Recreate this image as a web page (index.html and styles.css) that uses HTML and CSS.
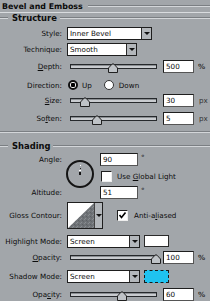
FILE: index.html
```html
<!DOCTYPE html>
<html lang="en">
<head>
<meta charset="UTF-8">
<title>Bevel and Emboss</title>
<link rel="stylesheet" href="styles.css">
</head>
<body>

<div class="panel">

    <div class="title-row">
        <span class="title">Bevel and Emboss</span>
        <span class="rule"></span>
    </div>

    <!-- STRUCTURE -->
    <div class="group-head">
        <span class="rule lead"></span>
        <span class="head">Structure</span>
        <span class="rule"></span>
    </div>

    <div class="row r-style">
        <span class="lbl">Style:</span>
        <div class="select w-style"><span>Inner Bevel</span><i class="btn"></i></div>
    </div>

    <div class="row r-tech">
        <span class="lbl">Technique:</span>
        <div class="select w-tech"><span>Smooth</span><i class="btn"></i></div>
    </div>

    <div class="row r-depth">
        <span class="lbl"><u>D</u>epth:</span>
        <div class="slider"><i class="thumb" style="left: 49%"></i></div>
        <div class="field">500</div>
        <span class="unit">%</span>
    </div>

    <div class="row r-dir">
        <span class="lbl">Direction:</span>
        <span class="radio on"></span><span class="opt">Up</span>
        <span class="radio down"></span><span class="opt">Down</span>
    </div>

    <div class="row r-size">
        <span class="lbl"><u>S</u>ize:</span>
        <div class="slider"><i class="thumb" style="left: 16%"></i></div>
        <div class="field">30</div>
        <span class="unit px">px</span>
    </div>

    <div class="row r-soften">
        <span class="lbl">So<u>f</u>ten:</span>
        <div class="slider"><i class="thumb" style="left: 31%"></i></div>
        <div class="field">5</div>
        <span class="unit px">px</span>
    </div>

    <div class="sep"></div>

    <!-- SHADING -->
    <div class="group-head g-shading">
        <span class="rule lead"></span>
        <span class="head">Shading</span>
        <span class="rule"></span>
    </div>

    <div class="angle-block">
        <div class="angle-labels">
            <span class="lbl">Angle:</span>
            <span class="lbl">Altitude:</span>
        </div>
        <svg class="dial" width="30" height="30" viewBox="0 0 30 30">
            <circle cx="15" cy="15" r="13" fill="none" stroke="#141414" stroke-width="2"/>
            <rect x="15" y="6" width="1" height="1" fill="#fff"/>
            <rect x="15" y="9" width="1" height="1" fill="#222"/>
            <rect x="14" y="11" width="2" height="1" fill="#fff"/>
            <rect x="14" y="13" width="2" height="3" fill="#141414"/>
        </svg>
        <div class="angle-fields">
            <div class="row">
                <div class="field f-angle">90</div><span class="deg">°</span>
            </div>
            <div class="row r-global">
                <span class="check"></span><span class="opt">Use <u>G</u>lobal Light</span>
            </div>
            <div class="row r-alt">
                <div class="field f-angle">51</div><span class="deg">°</span>
            </div>
        </div>
    </div>

    <div class="row r-gloss">
        <span class="lbl">Gloss Contour:</span>
        <div class="contour">
            <svg width="26" height="25" viewBox="0 0 26 25">
                <defs>
                    <pattern id="grain" width="4" height="4" patternUnits="userSpaceOnUse">
                        <rect width="4" height="4" fill="#6f7377"/>
                        <rect x="0" y="0" width="1" height="1" fill="#878b8f"/>
                        <rect x="2" y="1" width="1" height="1" fill="#5c6064"/>
                        <rect x="1" y="3" width="1" height="1" fill="#8a8e92"/>
                        <rect x="3" y="2" width="1" height="1" fill="#63676b"/>
                    </pattern>
                </defs>
                <rect width="26" height="25" fill="#fff"/>
                <polygon points="0,25 26,0 26,25" fill="url(#grain)"/>
            </svg>
            <i class="btn"></i>
        </div>
        <span class="check checked"></span><span class="opt">Anti-a<u>l</u>iased</span>
    </div>

    <div class="row r-hmode">
        <span class="lbl">Highlight Mode:</span>
        <div class="select w-mode"><span>Screen</span><i class="btn"></i></div>
        <span class="swatch"></span>
    </div>

    <div class="row r-hop">
        <span class="lbl"><u>O</u>pacity:</span>
        <div class="slider"><i class="thumb" style="left: 100%"></i></div>
        <div class="field">100</div>
        <span class="unit">%</span>
    </div>

    <div class="row r-smode">
        <span class="lbl">Shadow Mode:</span>
        <div class="select w-mode"><span>Screen</span><i class="btn"></i></div>
        <span class="swatch cyan"></span>
    </div>

    <div class="row r-sop">
        <span class="lbl">Opa<u>c</u>ity:</span>
        <div class="slider"><i class="thumb" style="left: 60%"></i></div>
        <div class="field">60</div>
        <span class="unit">%</span>
    </div>

</div>

</body>
</html>
```

FILE: styles.css
```css
body {
    margin: 0;
    background: #a2a6aa;
    font-family: "DejaVu Sans", Verdana, sans-serif;
    font-size: 7.2px;
    color: #0c0c0c;
}

u { text-decoration: underline; text-underline-offset: 1px; }

.panel {
    width: 210px;
    height: 301px;
    overflow: hidden;
}

/* HEADERS */
.title-row {
    display: flex;
    align-items: center;
    height: 12px;
    border-bottom: 1px solid #d9dcdf;
}

.title {
    font-weight: bold;
    font-size: 7.9px;
    padding-left: 2px;
    margin-right: 5px;
}

.rule {
    flex: 1;
    height: 0;
    border-top: 1px solid #7b7f83;
    border-bottom: 1px solid #d3d6d9;
}

.rule.lead { flex: none; width: 8px; }

.group-head {
    display: flex;
    align-items: center;
    height: 10px;
}

.head {
    font-weight: bold;
    font-size: 8.4px;
    padding: 0 3px 0 4px;
}

.g-shading { margin-top: 8px; }

.sep {
    margin-top: 6px;
    border-top: 1px solid #7b7f83;
    border-bottom: 1px solid #d3d6d9;
}

/* ROWS */
.row {
    display: flex;
    align-items: center;
    height: 14px;
}

.lbl {
    flex: none;
    width: 62px;
    margin-right: 5px;
    text-align: right;
    white-space: nowrap;
}

.r-style  { margin-top: 3px; }
.r-tech   { margin-top: 2px; }
.r-depth  { margin-top: 3px; }
.r-dir    { margin-top: 5px; }
.r-size   { margin-top: 1px; }
.r-soften { margin-top: 4px; }
.r-gloss  { margin-top: 2px; height: 28px; }
.r-hmode  { margin-top: 5px; }
.r-hop    { margin-top: 2px; }
.r-smode  { margin-top: 5px; }
.r-sop    { margin-top: 4px; }

/* CONTROLS */
.select {
    display: flex;
    align-items: center;
    height: 13px;
    box-sizing: border-box;
    background: #fff;
    border: 1px solid #1e1e1e;
    padding-left: 2px;
}

.select span { flex: 1; white-space: nowrap; overflow: hidden; }

.w-style { width: 85px; }
.w-tech  { width: 70px; }
.w-mode  { width: 73px; }

.btn {
    flex: none;
    width: 10px;
    height: 11px;
    box-sizing: border-box;
    background: #b3b7bb;
    border-left: 1px solid #2a2a2a;
    display: flex;
    align-items: center;
    justify-content: center;
}

.btn::after {
    content: "";
    border-left: 3px solid transparent;
    border-right: 3px solid transparent;
    border-top: 3px solid #111;
}

.slider {
    position: relative;
    flex: none;
    width: 87px;
    height: 5px;
    box-sizing: border-box;
    margin-left: 3px;
    border: 1px solid #26292c;
    background: #c9ccd0;
    box-shadow: inset 0 1px 0 #8a8e92;
}

.thumb {
    position: absolute;
    top: -2px;
    width: 10px;
    height: 10px;
    margin-left: -5px;
    background: url("data:image/svg+xml;utf8,<svg xmlns='http://www.w3.org/2000/svg' width='10' height='10'><path d='M0.5 9.5 V5 L4 1.2 Q5 0.4 6 1.2 L9.5 5 V9.5 Z' fill='%23bfc3c7' stroke='%23202020'/></svg>");
}

.field {
    flex: none;
    width: 31px;
    height: 13px;
    box-sizing: border-box;
    margin-left: 6px;
    padding: 1px 0 0 2px;
    background: #fff;
    border: 1px solid #1e1e1e;
    border-right-color: #555;
    border-bottom-color: #555;
    line-height: 10px;
}

.unit { margin-left: 4px; font-weight: bold; color: #333; }
.unit.px { font-weight: normal; margin-left: 5px; }

.radio {
    flex: none;
    width: 10px;
    height: 10px;
    box-sizing: border-box;
    border-radius: 50%;
    background: #fff;
    border: 1px solid #333;
    margin-left: 1px;
}

.radio.on {
    background: radial-gradient(circle, #000 0 2px, #fff 2.5px);
    border: 2px solid #111;
}

.radio.down { margin-left: 12px; }

.opt { margin-left: 4px; white-space: nowrap; }
.radio.down + .opt { margin-left: 5px; }

.check {
    flex: none;
    width: 11px;
    height: 11px;
    box-sizing: border-box;
    background: #fff;
    border: 1px solid #1e1e1e;
    border-right-color: #eee;
    border-bottom-color: #eee;
}

.check.checked {
    margin-left: 14px;
    background: #fff url("data:image/svg+xml;utf8,<svg xmlns='http://www.w3.org/2000/svg' width='9' height='9'><path d='M1.5 4 L3.5 6.5 L7.5 1.5' fill='none' stroke='%23000' stroke-width='1.6'/></svg>") center no-repeat;
}

.check.checked + .opt { margin-left: 6px; }

.swatch {
    flex: none;
    width: 25px;
    height: 12px;
    box-sizing: border-box;
    margin-left: 4px;
    background: #fff;
    border: 1px solid #2a2a2a;
}

.swatch.cyan {
    height: 13px;
    background: #1fc3f0;
    border: 1px dashed #1a1a1a;
}

/* ANGLE */
.angle-block {
    display: flex;
    margin-top: 1px;
    height: 47px;
}

.angle-labels {
    display: flex;
    flex-direction: column;
    justify-content: space-between;
    padding: 3px 0 2px;
}

.dial {
    flex: none;
    margin: 7px 0 0 -2px;
}

.angle-fields {
    margin-left: 5px;
}

.f-angle { width: 38px; margin-left: 0; }

.deg { margin-left: 3px; align-self: flex-start; margin-top: 1px; }

.r-global { margin-top: 3px; }
.r-global .check { margin-left: 1px; }
.r-global .opt { margin-left: 5px; }
.r-alt { margin-top: 2px; }

/* GLOSS CONTOUR */
.contour {
    flex: none;
    display: flex;
    height: 27px;
    box-sizing: border-box;
    border: 1px solid #1e1e1e;
}

.contour svg { display: block; }

.contour .btn {
    height: 25px;
    width: 8px;
    border-left: 1px solid #444;
}
```
